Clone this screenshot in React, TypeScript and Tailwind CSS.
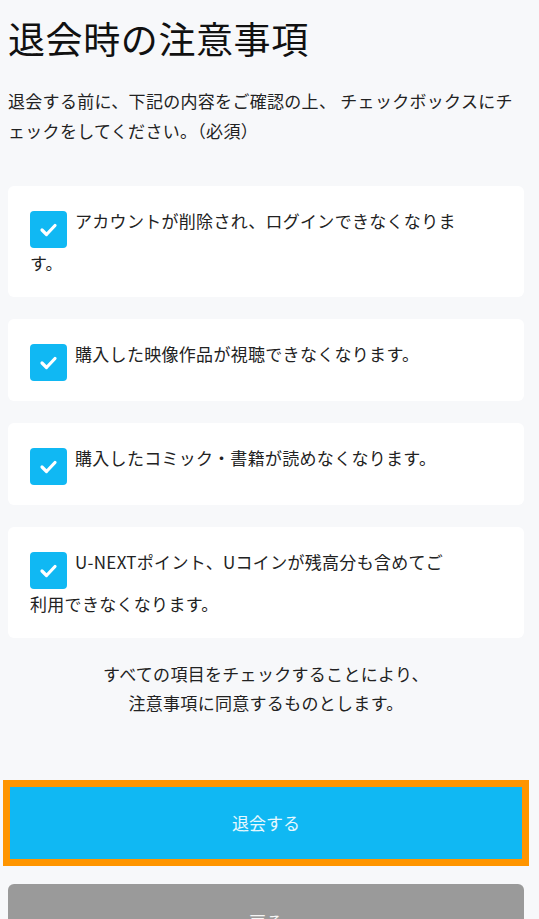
import React from "react";

const items = [
  "アカウントが削除され、ログインできなくなります。",
  "購入した映像作品が視聴できなくなります。",
  "購入したコミック・書籍が読めなくなります。",
  "U-NEXTポイント、Uコインが残高分も含めてご利用できなくなります。",
];

function Check() {
  return (
    <span className="inline-block h-[37px] w-[37px] rounded-[4px] bg-[#10b8f3] align-[-20px] mr-[8px]">
      <svg viewBox="0 0 37 37" className="block h-[37px] w-[37px]">
        <path d="M12 19 L16.5 23.5 L25 14.5" fill="none" stroke="#fff" strokeWidth="3.2" strokeLinecap="round" strokeLinejoin="round" />
      </svg>
    </span>
  );
}

export default function App() {
  return (
    <div
      className="min-h-screen bg-[#f7f8fa] pl-2 pr-[15px] text-[#222] overflow-hidden"
      style={{ fontFamily: '"Noto Sans CJK JP", "Noto Sans", sans-serif' }}
    >
      <h1 className="pt-[11px] text-[37px] leading-[54px] font-normal tracking-[0.6px] text-[#111]">退会時の注意事項</h1>
      <p className="mt-[21px] text-[17px] leading-[30px] tracking-[0.3px]">
        退会する前に、下記の内容をご確認の上、 チェックボックスにチェックをしてください。（必須）
      </p>
      <div className="mt-[40px] flex flex-col gap-[22px]">
        {items.map((t) => (
          <div key={t} className="rounded-[6px] bg-white pt-[20px] pb-[20px] pl-[22px] pr-[68px]">
            <p className="text-[17px] leading-[29px] tracking-[0.3px]">
              <Check />
              {t}
            </p>
          </div>
        ))}
      </div>
      <p className="mt-[21px] text-center text-[17px] leading-[29px] tracking-[0.3px]">
        すべての項目をチェックすることにより、
        <br />
        注意事項に同意するものとします。
      </p>
      <button className="mt-[68px] block h-[76px] w-full border-2 border-[#ff9500] bg-[#10b8f3] text-[17px] text-white/90 outline outline-[5px] outline-[#ff9500]">
        退会する
      </button>
      <button className="mt-[23px] block h-[76px] w-full rounded-[6px] bg-[#9a9a9a] text-[17px] text-white/90">
        戻る
      </button>
    </div>
  );
}
